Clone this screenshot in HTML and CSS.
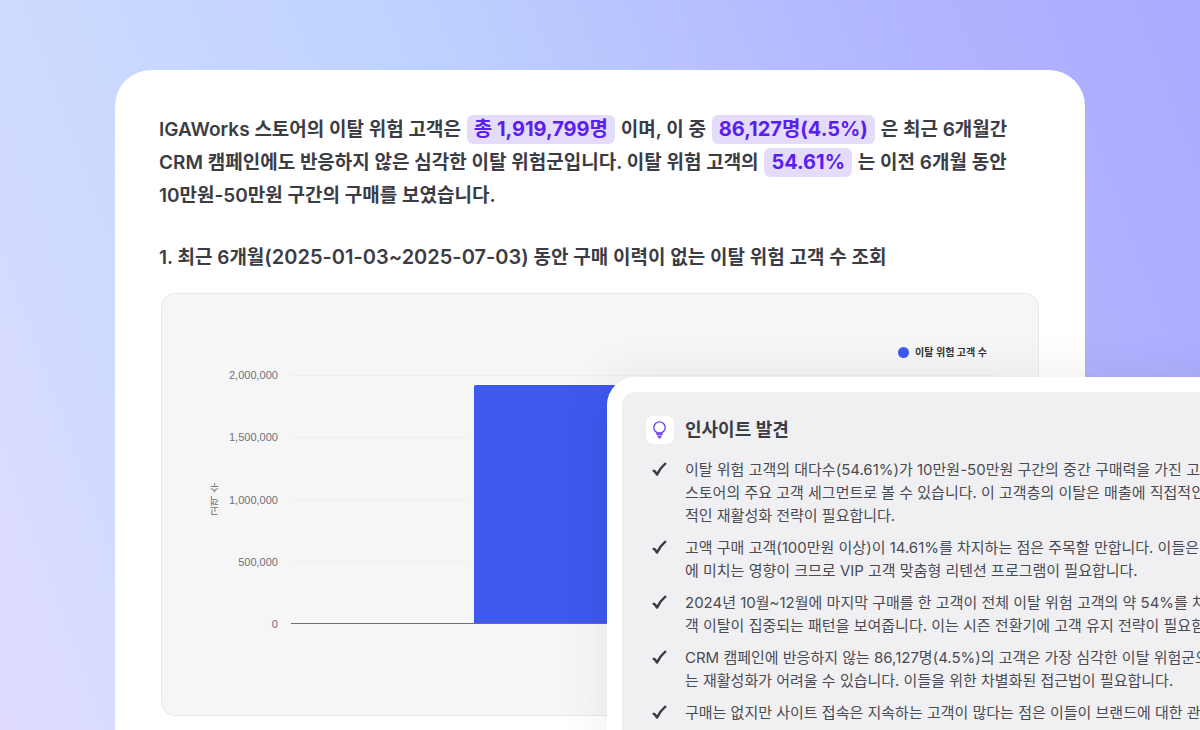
FILE: index.html
```html
<!DOCTYPE html>
<html lang="ko">
<head>
<meta charset="utf-8">
<meta name="viewport" content="width=device-width, initial-scale=1">
<title>이탈 위험 고객 리포트</title>
<link rel="stylesheet" href="styles.css">
</head>
<body>
<svg class="symbols" aria-hidden="true">
  <symbol id="check" viewBox="0 0 15 15">
    <path d="M1.700 8.800C3 9.200 4 10.500 4.900 12.600 6.800 8.700 9.600 4.900 13.300 1.700" fill="none" stroke="currentColor" stroke-width="2.400" stroke-linecap="round" stroke-linejoin="round"/>
    <path d="M.8 8.200 4 12.500 5.500 13.500 7.500 10 5 10.500 3 8z" fill="currentColor"/>
  </symbol>
</svg>
<main class="stage">
  <article class="report">
    <p class="summary">IGAWorks 스토어의 이탈 위험 고객은 <mark class="figure">총 1,919,799명</mark> 이며, 이 중 <mark class="figure">86,127명(4.5%)</mark> 은 최근 6개월간<br>CRM 캠페인에도 반응하지 않은 심각한 이탈 위험군입니다. 이탈 위험 고객의 <mark class="figure">54.61%</mark> 는 이전 6개월 동안<br>10만원-50만원 구간의 구매를 보였습니다.</p>
    <h2 class="section-title">1. 최근 6개월<span class="period">(2025-01-03~2025-07-03)</span> 동안 구매 이력이 없는 이탈 위험 고객 수 조회</h2>
    <figure class="chart">
      <figcaption class="legend"><span class="dot"></span>이탈 위험 고객 수</figcaption>
      <div class="chart-body">
        <span class="axis-title">고객 수</span>
        <div class="ticks">
          <span>2,000,000</span>
          <span>1,500,000</span>
          <span>1,000,000</span>
          <span>500,000</span>
          <span>0</span>
        </div>
        <div class="plot">
          <div class="band"></div>
          <div class="band"></div>
          <div class="band"></div>
          <div class="band"></div>
          <div class="bar" style="height: 96%"></div>
        </div>
      </div>
    </figure>
  </article>

  <aside class="insight">
    <div class="insight-panel">
      <header class="insight-head">
        <span class="badge">
          <svg class="bulb" viewBox="0 0 16 18" aria-hidden="true">
            <circle class="bulb-glass" cx="7.500" cy="6.500" r="5.700"/>
            <path class="bulb-base" d="M4.300 11.500h6.400v2.600H4.300zM5.200 14.500h4.600v1.300H5.200zM6.200 15.800h2.600v1.600H6.200z"/>
          </svg>
        </span>
        <h3 class="insight-title">인사이트 발견</h3>
      </header>
      <ul class="findings">
        <li><svg class="check"><use href="#check"/></svg><p>이탈 위험 고객의 대다수(54.61%)가 10만원-50만원 구간의 중간 구매력을 가진 고객<br>스토어의 주요 고객 세그먼트로 볼 수 있습니다. 이 고객층의 이탈은 매출에 직접적인 영<br>적인 재활성화 전략이 필요합니다.</p></li>
        <li><svg class="check"><use href="#check"/></svg><p>고액 구매 고객(100만원 이상)이 14.61%를 차지하는 점은 주목할 만합니다. 이들은 고<br>에 미치는 영향이 크므로 VIP 고객 맞춤형 리텐션 프로그램이 필요합니다.</p></li>
        <li><svg class="check"><use href="#check"/></svg><p>2024년 10월~12월에 마지막 구매를 한 고객이 전체 이탈 위험 고객의 약 54%를 차지<br>객 이탈이 집중되는 패턴을 보여줍니다. 이는 시즌 전환기에 고객 유지 전략이 필요함을</p></li>
        <li><svg class="check"><use href="#check"/></svg><p>CRM 캠페인에 반응하지 않는 86,127명(4.5%)의 고객은 가장 심각한 이탈 위험군으로<br>는 재활성화가 어려울 수 있습니다. 이들을 위한 차별화된 접근법이 필요합니다.</p></li>
        <li><svg class="check"><use href="#check"/></svg><p>구매는 없지만 사이트 접속은 지속하는 고객이 많다는 점은 이들이 브랜드에 대한 관심</p></li>
      </ul>
    </div>
  </aside>
</main>
</body>
</html>
```
FILE: styles.css
```css
* {
  box-sizing: border-box;
}

body {
  margin: 0;
  font-family: Inter, "Noto Sans CJK KR", sans-serif;
  color: #3b3c44;
}

h2, h3, p, ul, figure {
  margin: 0;
  padding: 0;
}

.symbols {
  display: none;
}

.stage {
  position: relative;
  height: 100vh;
  overflow: hidden;
  padding: 70px 115px 0;
  background: linear-gradient(70deg, #dfdbff 0%, #cddaff 20%, #bed3ff 44%, #b2b5ff 78%, #acaaff 100%);
}

.report {
  padding: 43px 46px 64px 44px;
  border-radius: 36px;
  background: #fff;
}

.summary {
  font-size: 19px;
  font-weight: 600;
  line-height: 33px;
  white-space: nowrap;
}

.figure {
  display: inline-block;
  margin: 0 1px;
  padding: 0 7px;
  border-radius: 6px;
  background: #e5dbfb;
  color: #5a1fee;
  font-size: 20px;
  font-weight: 700;
  line-height: 29px;
}

.section-title {
  margin: 29px 0 19px;
  font-size: 19px;
  font-weight: 600;
  line-height: 32px;
  white-space: nowrap;
}

.period {
  font-size: 20px;
}

.chart {
  margin-left: 2px;
  padding: 50px 42px 91px 48px;
  border: 1px solid #e8e8ea;
  border-radius: 14px;
  background: #f6f6f7;
}

.legend {
  display: flex;
  justify-content: flex-end;
  align-items: center;
  gap: 6px;
  margin: 0 9px 15px 0;
  color: #333;
  font-size: 10px;
  font-weight: 600;
  line-height: 16px;
}

.dot {
  width: 11px;
  height: 11px;
  border-radius: 50%;
  background: #3f58ee;
}

.chart-body {
  display: flex;
  color: #6e7079;
  font-family: "Liberation Sans", "Noto Sans CJK KR", sans-serif;
  font-size: 11px;
  line-height: 12px;
}

.axis-title {
  align-self: center;
  margin-right: 7px;
  font-size: 10px;
  writing-mode: vertical-rl;
  transform: rotate(180deg);
}

.ticks {
  display: flex;
  flex-direction: column;
  justify-content: space-between;
  margin: -6px 13px -6px 0;
  text-align: right;
}

.plot {
  position: relative;
  flex: 1;
  border-bottom: 1px solid #6e7079;
}

.band {
  height: 62px;
  border-top: 1px solid #eeeeef;
}

.bar {
  position: absolute;
  bottom: 0;
  left: 26%;
  width: 48%;
  border-radius: 2px 2px 0 0;
  background: #3f58ee;
  box-shadow: -9px 0 #f6f6f7;
}

.insight {
  position: absolute;
  top: 377px;
  left: 607px;
  width: 760px;
  padding: 15px;
  border-radius: 28px;
  background: #fff;
  box-shadow: 0 0 50px rgba(0, 0, 0, 0.08);
}

.insight-panel {
  padding: 24px;
  border-radius: 14px;
  background: #f0f0f3;
}

.insight-head {
  display: flex;
  align-items: center;
  gap: 11px;
  margin-bottom: 14px;
}

.badge {
  display: flex;
  align-items: center;
  justify-content: center;
  width: 28px;
  height: 28px;
  border-radius: 7px;
  background: #fff;
}

.bulb {
  width: 16px;
  height: 18px;
}

.bulb-glass {
  fill: none;
  stroke: #6a3df0;
  stroke-width: 1.3;
}

.bulb-base {
  fill: #7a4df3;
}

.insight-title {
  font-size: 18px;
  font-weight: 600;
  line-height: 28px;
}

.findings {
  display: flex;
  flex-direction: column;
  gap: 9px;
  list-style: none;
  font-size: 15px;
  line-height: 23px;
  color: #4a4b52;
  white-space: nowrap;
}

.findings li {
  display: flex;
  gap: 18px;
  padding-left: 6px;
}

.check {
  flex: none;
  width: 15px;
  height: 15px;
  margin-top: 4px;
  color: #3b3c44;
}
```
